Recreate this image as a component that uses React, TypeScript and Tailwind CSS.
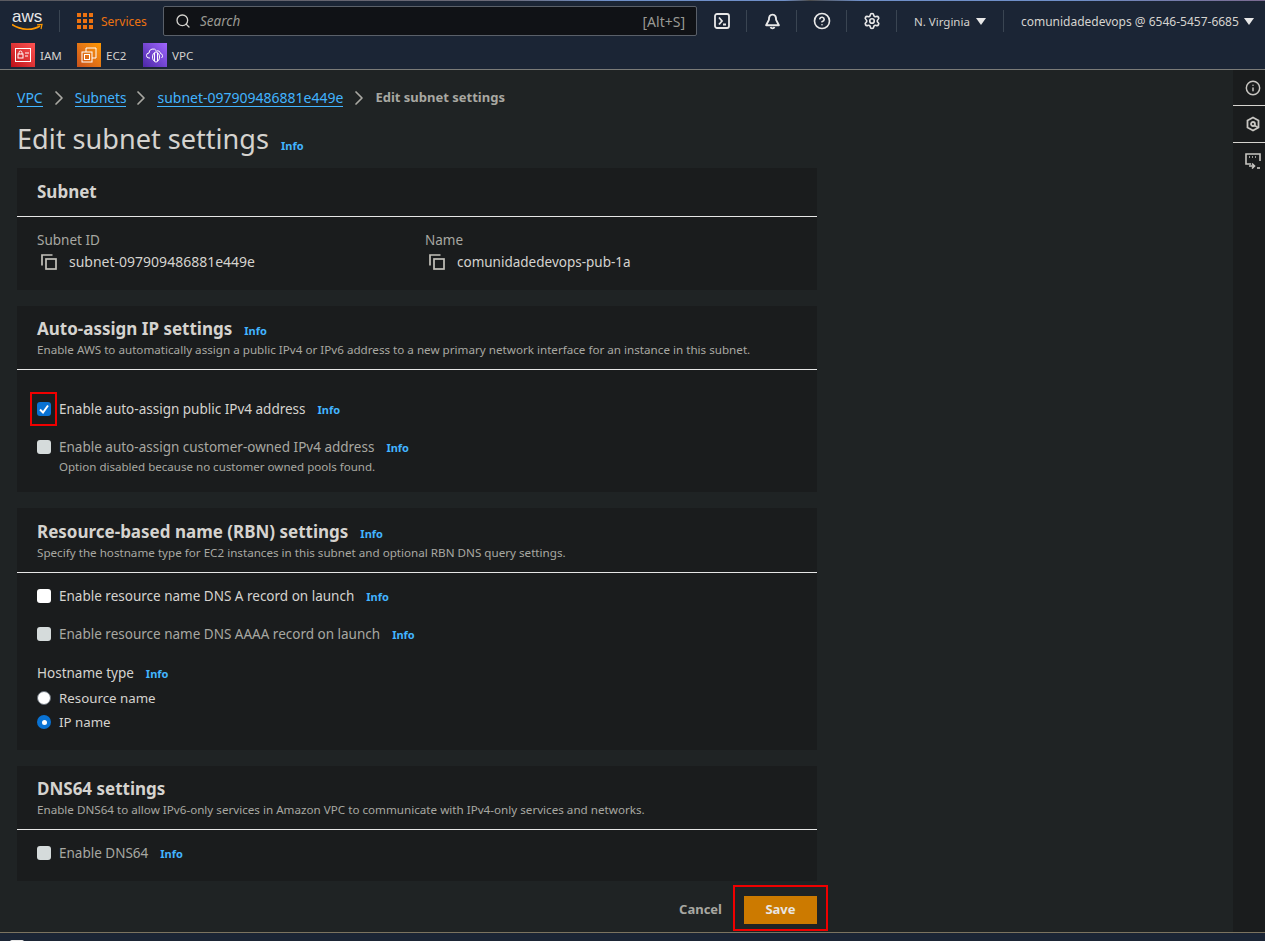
import React from "react";
import { Search, Info as InfoIcon, CircleHelp, Settings, ChevronRight } from "lucide-react";

const Info = ({ className = "" }: { className?: string }) => (
  <span className={`text-[11px] font-bold text-[#42b4ff] leading-none ${className}`}>Info</span>
);

const Copy = () => (
  <svg width="16" height="16" viewBox="0 0 16 16" fill="none" stroke="#c4c1ba" strokeWidth="1.7">
    <path d="M1 11.5V1h10.5" />
    <rect x="5" y="5" width="10" height="10" />
  </svg>
);

const Check = ({ label, info, disabled, checked, sub, outlined }: { label: string; info?: boolean; disabled?: boolean; checked?: boolean; sub?: string; outlined?: boolean }) => (
  <div className="flex items-start">
    <div className="relative w-[14px] h-[14px] mt-[3px] mr-2">
      <div className={`w-[14px] h-[14px] rounded-[3px] flex items-center justify-center ${checked ? "bg-[#0972d3]" : disabled ? "bg-[#d5dbdb]" : "bg-white"}`}>
        {checked && (
          <svg width="10" height="10" viewBox="0 0 10 10" fill="none" stroke="white" strokeWidth="2">
            <path d="M1 5.5 L4 8.5 L9 1.5" />
          </svg>
        )}
      </div>
      {outlined && <div className="absolute -left-[7px] -top-[10px] w-[27px] h-[34px] border-2 border-[#f00000]" />}
    </div>
    <div>
      <div className={`text-[13.5px] leading-5 flex items-center whitespace-nowrap ${disabled ? "text-[#a8a8a2]" : "text-[#d5d3cf]"}`}>
        {label}
        {info && <Info className="ml-3" />}
      </div>
      {sub && <div className="text-[11.55px] leading-4 mt-[2px] text-[#a8a8a2]">{sub}</div>}
    </div>
  </div>
);

const Header = ({ title, desc, info, className = "pt-[11px] pb-[11px]" }: { title: string; desc?: string; info?: boolean; className?: string }) => (
  <div className={`border-b border-[#e6e6e6] px-5 ${className}`}>
    <div className="flex items-center">
      <h2 className="text-[17px] font-bold leading-6 text-[#d5d3cf]">{title}</h2>
      {info && <Info className="ml-3 mt-[3px]" />}
    </div>
    {desc && <p className="text-[11.65px] leading-4 mt-[1px] text-[#a8a8a2] whitespace-nowrap">{desc}</p>}
  </div>
);

const Service = ({ bg, label, children }: { bg: string; label: string; children: React.ReactNode }) => (
  <div className="flex items-center gap-[5px] mr-[15px]">
    <div className={`w-6 h-6 flex items-center justify-center ${bg}`}>{children}</div>
    <span className="text-[11.6px] w-[22px] text-[#d5d3cf] mt-[1px]">{label}</span>
  </div>
);

const Sep = () => <div className="w-px h-[22px] bg-[#3a4552]" />;

const Crumb = ({ children, className = "text-[14px]" }: { children: React.ReactNode; className?: string }) => (
  <a className={`text-[#42b4ff] border-b border-[#42b4ff] leading-[17px] whitespace-nowrap ${className}`}>{children}</a>
);

const Chevron = () => <ChevronRight size={24} strokeWidth={1.7} className="mx-[4px] -mt-[3px] text-[#a8a8a2] shrink-0" />;

export default function App() {
  return (
    <div className="h-[941px] w-[1265px] overflow-hidden flex flex-col bg-[#1f2324] font-['Noto_Sans',sans-serif]">
      <div className="h-px shrink-0 bg-[linear-gradient(90deg,#5a5a60_0%,#6b6a78_40%,#6f8fc8_48%,#6f8fc8_62%,#4a4a4a_64%,#6f8fc8_68%,#6f8fc8_85%,#7a6a90_100%)]" />
      <header className="shrink-0 h-[69px] bg-[#1b2535] border-b border-[#7b7b78]">
        <div className="h-[40px] flex items-center">
          <div className="w-[59px] pl-[12px] flex flex-col items-start">
            <span className="text-[17px] leading-[13px] h-[13px] text-[#e8e8e8] font-['Liberation_Sans',sans-serif]">aws</span>
            <svg width="32" height="9" viewBox="0 0 32 9" fill="none" className="block">
              <path d="M0 1.5 C 9 7.5, 21 7.5, 28 3" stroke="#f90" strokeWidth="1.6" />
              <path d="M25 1.8 L30 1.5 L29 6" stroke="#f90" strokeWidth="1.2" />
            </svg>
          </div>
          <Sep />
          <div className="flex items-center ml-[17px] gap-2 w-[86px]">
            <svg width="16" height="16" viewBox="0 0 16 16" fill="#ec7211">
              {[0, 6, 12].flatMap((x) => [0, 6, 12].map((y) => <rect key={`${x}-${y}`} x={x} y={y} width="4" height="4" />))}
            </svg>
            <span className="text-[12px] text-[#ec7211] mt-[1px]">Services</span>
          </div>
          <div className="w-[534px] h-[30px] bg-[#101216] border border-[#5a6069] rounded-[2px] flex items-center px-[11px]">
            <Search size={16} className="text-[#d5d3cf]" />
            <span className="ml-[9px] italic text-[13.5px] text-[#9a9a94]">Search</span>
            <span className="ml-auto text-[14px] text-[#9a9a94]">[Alt+S]</span>
          </div>
          <div className="flex items-center ml-[17px]">
            <svg width="16" height="16" viewBox="0 0 16 16" fill="none" stroke="#e8e8e8" strokeWidth="1.8">
              <rect x="1" y="1" width="14" height="14" rx="2" />
              <path d="M5 4.5 L8 8 L5 11.5 M9 11.5 H12" />
            </svg>
            <div className="ml-[16px]"><Sep /></div>
            <svg width="17" height="17" viewBox="0 0 16 16" fill="none" stroke="#e8e8e8" strokeWidth="1.8" className="ml-[17px]">
              <path d="M8 1.5C5.2 1.5 4.6 4 4.6 6.5L2 11.5H14L11.4 6.5C11.4 4 10.8 1.5 8 1.5Z" strokeLinejoin="round" />
              <path d="M6.2 13.2a1.9 1.9 0 0 0 3.6 0" />
            </svg>
            <div className="ml-[15px]"><Sep /></div>
            <CircleHelp size={18} className="ml-[16px] text-[#e8e8e8]" strokeWidth={2.2} />
            <div className="ml-[15px]"><Sep /></div>
            <Settings size={18} className="ml-[16px] text-[#e8e8e8]" strokeWidth={2.2} />
            <div className="ml-[15px]"><Sep /></div>
            <span className="ml-[17px] text-[11.5px] text-[#d5d3cf] mt-[1px] whitespace-nowrap">N. Virginia</span>
            <span className="ml-[6px] w-0 h-0 border-x-[5px] border-x-transparent border-t-[7px] border-t-[#e8e8e8]" />
            <div className="ml-[17px]"><Sep /></div>
            <span className="ml-[17px] text-[12px] text-[#d5d3cf] mt-[1px] whitespace-nowrap">comunidadedevops @ 6546-5457-6685</span>
            <span className="ml-[5px] w-0 h-0 border-x-[5px] border-x-transparent border-t-[7px] border-t-[#e8e8e8]" />
          </div>
        </div>
        <div className="h-[28px] flex items-center pl-[11px]">
          <Service bg="bg-linear-to-tr from-[#bd0816] to-[#ff5252]" label="IAM">
            <svg width="16" height="14" viewBox="0 0 16 14" fill="none" stroke="white" strokeWidth="1">
              <rect x="0.5" y="0.5" width="15" height="13" />
              <rect x="3" y="6" width="5" height="4" />
              <path d="M4 6V4.5a1.5 1.5 0 0 1 3 0V6M10 5h4M10 8h3" />
            </svg>
          </Service>
          <Service bg="bg-linear-to-tr from-[#c8511b] to-[#ff9900]" label="EC2">
            <svg width="16" height="16" viewBox="0 0 16 16" fill="none" stroke="white" strokeWidth="1">
              <rect x="1" y="5" width="10" height="10" />
              <path d="M5 5V1h10v10h-4" />
              <rect x="3.5" y="7.5" width="5" height="5" />
            </svg>
          </Service>
          <Service bg="bg-linear-to-tr from-[#4d27a8] to-[#a166ff]" label="VPC">
            <svg width="18" height="16" viewBox="0 0 18 16" fill="none" stroke="white" strokeWidth="1">
              <path d="M4 11H3a2.5 2.5 0 0 1 0-5 4 4 0 0 1 7.5-2 3 3 0 0 1 4 2.5 2.5 2.5 0 0 1 1 4.5" />
              <ellipse cx="10" cy="10" rx="3.5" ry="5" />
              <path d="M8.5 6v8M11.5 6v8" />
            </svg>
          </Service>
        </div>
      </header>

      <div className="flex-1 flex min-h-0">
        <main className="flex-1 min-w-0 px-[17px]">
          <nav className="h-[54px] pt-[19px] flex items-start">
            <Crumb>VPC</Crumb>
            <Chevron />
            <Crumb className="text-[13.6px] mr-[-1px]">Subnets</Crumb>
            <Chevron />
            <Crumb>subnet-097909486881e449e</Crumb>
            <Chevron />
            <span className="text-[13px] font-bold text-[#a8a8a2] leading-[17px] whitespace-nowrap">Edit subnet settings</span>
          </nav>
          <div className="h-[44px] flex items-start">
            <h1 className="text-[27.1px] leading-[30px] text-[#d5d3cf] whitespace-nowrap">Edit subnet settings</h1>
            <Info className="ml-3 mt-[16px]" />
          </div>

          <div className="w-[800px] flex flex-col gap-4">
            <section className="bg-[#1a1c1d] h-[122px]">
              <Header title="Subnet" className="pt-[12px] pb-[12px]" />
              <div className="px-5 pt-[13px] flex">
                <div className="w-[388px]">
                  <div className="text-[13.5px] leading-5 text-[#a8a8a2]">Subnet ID</div>
                  <div className="flex items-center gap-[12px] text-[14px] leading-5 text-[#d5d3cf] mt-[2px] pl-1"><Copy />subnet-097909486881e449e</div>
                </div>
                <div>
                  <div className="text-[13.5px] leading-5 text-[#a8a8a2]">Name</div>
                  <div className="flex items-center gap-[12px] text-[13.5px] leading-5 text-[#d5d3cf] mt-[2px] pl-1"><Copy />comunidadedevops-pub-1a</div>
                </div>
              </div>
            </section>

            <section className="bg-[#1a1c1d] h-[186px]">
              <Header title="Auto-assign IP settings" info desc="Enable AWS to automatically assign a public IPv4 or IPv6 address to a new primary network interface for an instance in this subnet." />
              <div className="px-5 pt-[29px] flex flex-col gap-[18px]">
                <Check label="Enable auto-assign public IPv4 address" info checked outlined />
                <Check label="Enable auto-assign customer-owned IPv4 address" info disabled sub="Option disabled because no customer owned pools found." />
              </div>
            </section>

            <section className="bg-[#1a1c1d] h-[242px]">
              <Header title="Resource-based name (RBN) settings" info className="pt-[12px] pb-[11px]" desc="Specify the hostname type for EC2 instances in this subnet and optional RBN DNS query settings." />
              <div className="px-5 pt-[13px] flex flex-col gap-[18px]">
                <Check label="Enable resource name DNS A record on launch" info />
                <Check label="Enable resource name DNS AAAA record on launch" info disabled />
                <div className="mt-[1px]">
                  <div className="text-[13.5px] leading-5 text-[#d5d3cf] flex items-center">Hostname type<Info className="ml-3" /></div>
                  <div className="mt-[5px] flex items-center text-[13.3px] leading-5 text-[#d5d3cf]">
                    <span className="w-[14px] h-[14px] rounded-full bg-white border border-[#687078] mr-2" />Resource name
                  </div>
                  <div className="mt-1 flex items-center text-[13.3px] leading-5 text-[#d5d3cf]">
                    <span className="w-[14px] h-[14px] rounded-full bg-[#0972d3] mr-2 flex items-center justify-center"><span className="w-[5px] h-[5px] rounded-full bg-white" /></span>IP name
                  </div>
                </div>
              </div>
            </section>

            <section className="bg-[#1a1c1d] h-[115px]">
              <Header title="DNS64 settings" desc="Enable DNS64 to allow IPv6-only services in Amazon VPC to communicate with IPv4-only services and networks." />
              <div className="px-5 pt-[13px]">
                <Check label="Enable DNS64" info disabled />
              </div>
            </section>
          </div>

          <div className="w-[800px] mt-[5px] flex justify-end items-center relative">
            <span className="text-[13px] font-bold text-[#a8a8a2] mr-[22px] mt-[10px]">Cancel</span>
            <div className="relative">
              <button className="block w-[73px] h-[28px] mt-[10px] bg-[#cc7a00] text-[13px] font-bold text-[#e8e6e3]">Save</button>
              <div className="absolute -left-[11px] -top-[1px] w-[95px] h-[46px] border-2 border-[#f00000]" />
            </div>
          </div>
        </main>
        <aside className="w-[32px] shrink-0 bg-[#1a1c1d] text-[#c8c6c2]">
          <div className="h-[36px] flex items-center pl-[12px] border-b border-[#d5d3cf]"><InfoIcon size={16} strokeWidth={2.2} /></div>
          <div className="h-[37px] flex items-center pl-[12px] border-b border-[#d5d3cf]">
            <svg width="16" height="16" viewBox="0 0 16 16" fill="none" stroke="currentColor" strokeWidth="1.8"><path d="M8 1.5 13.5 4.5v7L8 14.5 2.5 11.5v-7Z" /><circle cx="8" cy="8" r="2" /><path d="M9.5 9.5 13 11.5" /></svg>
          </div>
          <div className="h-[36px] flex items-center pl-[12px]">
            <svg width="16" height="16" viewBox="0 0 16 16" fill="none" stroke="currentColor" strokeWidth="1.6"><path d="M6 11H1V1h14v7" /><path d="M4 4h1M7 4h1M10 4h1" /><path d="M4 13h5M7 10.5 9.5 13 7 15.5" /><path d="M12 15h3" /></svg>
          </div>
        </aside>
      </div>
      <footer className="shrink-0 h-[9px] bg-[#1b2535] border-t border-[#7b7360] relative overflow-hidden">
        <div className="absolute left-[10px] top-[7px] w-[14px] h-[10px] bg-[#e8e8e8] rounded-[2px]" />
      </footer>
    </div>
  );
}
